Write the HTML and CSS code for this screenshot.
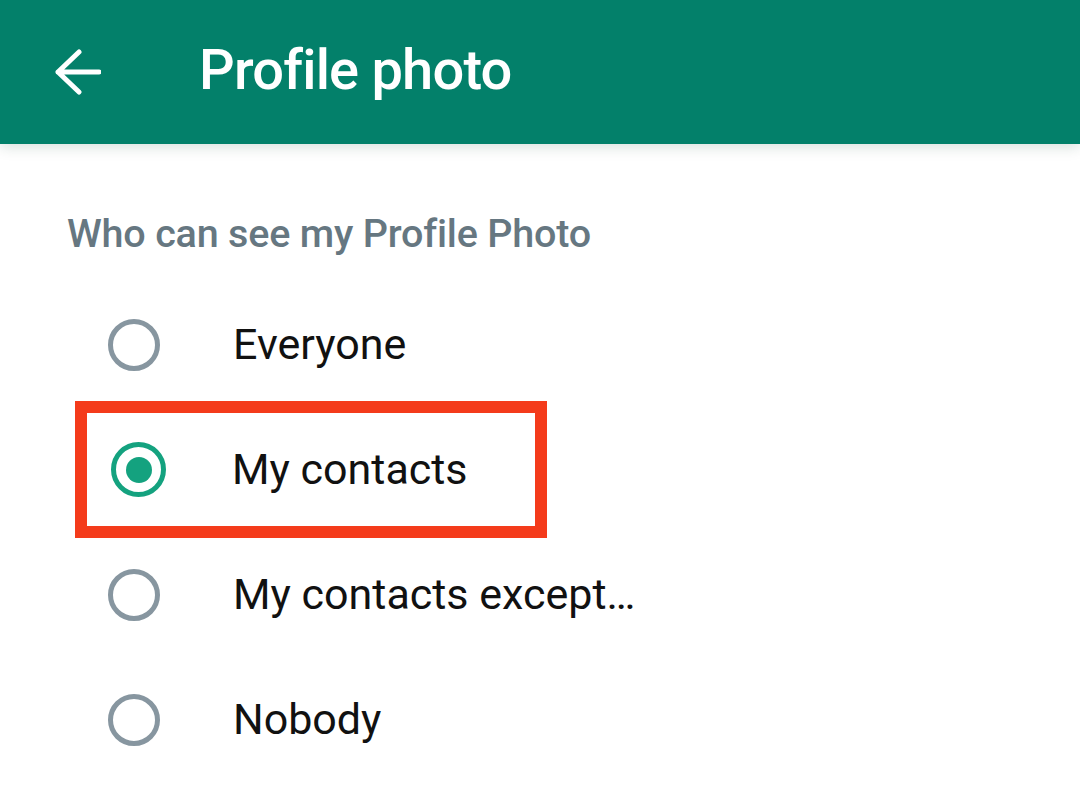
FILE: index.html
```html
<!DOCTYPE html>
<html>
<head>
<meta charset="utf-8">
<link rel="stylesheet" href="styles.css">
</head>
<body>
<header class="appbar">
  <svg class="back" width="48" height="48" viewBox="0 0 48 48">
    <path d="M46 24H5M26 4L5 24l21 20" fill="none" stroke="#ffffff" stroke-width="5" stroke-linecap="round" stroke-linejoin="round"/>
  </svg>
  <h1 class="title">Profile photo</h1>
</header>
<main class="content">
  <div class="section-label">Who can see my Profile Photo</div>
  <ul class="options">
    <li class="option"><span class="radio"></span><span class="label">Everyone</span></li>
    <li class="option highlighted"><span class="radio checked"></span><span class="label">My contacts</span></li>
    <li class="option"><span class="radio"></span><span class="label">My contacts except…</span></li>
    <li class="option"><span class="radio"></span><span class="label">Nobody</span></li>
  </ul>
</main>
</body>
</html>
```
FILE: styles.css
```css
html, body {
  margin: 0;
  padding: 0;
  background: #ffffff;
  width: 1080px;
  height: 798px;
  overflow: hidden;
  font-family: Roboto, "Liberation Sans", sans-serif;
}
.appbar {
  height: 144px;
  background: #03806a;
  display: flex;
  align-items: center;
  box-shadow: 0 2px 14px rgba(0, 60, 40, 0.18);
  position: relative;
  z-index: 1;
}
.back {
  margin-left: 53px;
  flex: none;
}
.title {
  margin: 0 0 0 98px;
  color: #ffffff;
  font-size: 56px;
  font-weight: 500;
  letter-spacing: -0.8px;
  line-height: 1;
  padding-bottom: 4px;
}
.content {
  padding: 62px 0 0 67px;
}
.section-label {
  color: #667781;
  font-size: 39.5px;
  font-weight: 500;
  letter-spacing: -0.2px;
  line-height: 56px;
}
.options {
  list-style: none;
  margin: 20px 0 0 0;
  padding: 0;
}
.option {
  height: 125px;
  display: flex;
  align-items: center;
  box-sizing: border-box;
  width: 472px;
  margin-left: 8px;
}
.option.highlighted {
  border: 12px solid #f43b1b;
  height: 137px;
  margin-top: -6px;
  margin-bottom: -6px;
}
.option.highlighted .radio {
  margin-left: 24px;
}
.option.highlighted .label {
  margin-left: 66px;
}
.radio {
  width: 52px;
  height: 52px;
  border: 5px solid #8796a0;
  border-radius: 50%;
  box-sizing: border-box;
  margin-left: 33px;
  flex: none;
  display: flex;
  align-items: center;
  justify-content: center;
}
.radio.checked {
  width: 55px;
  height: 55px;
  border-color: #14a27f;
}
.radio.checked::after {
  content: "";
  width: 26px;
  height: 26px;
  border-radius: 50%;
  background: #14a27f;
}
.label {
  margin-left: 73px;
  font-size: 43px;
  color: #111111;
  white-space: nowrap;
  padding-bottom: 2px;
}
```
